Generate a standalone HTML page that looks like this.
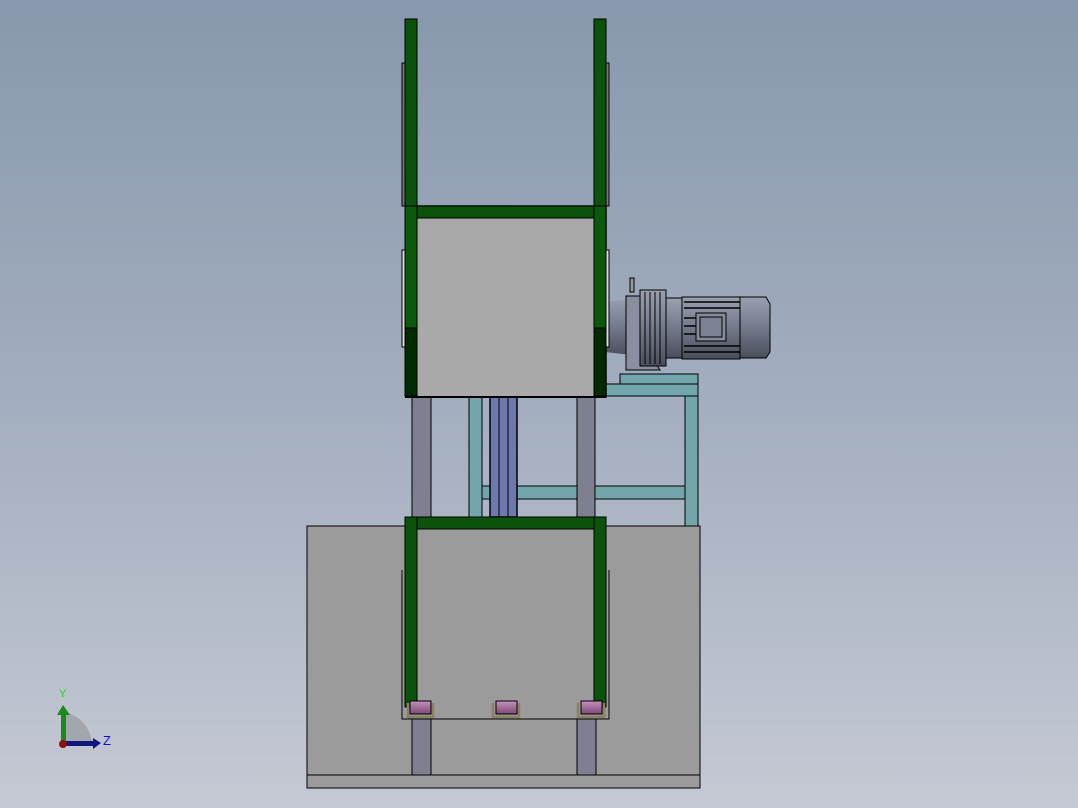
<!DOCTYPE html>
<html><head><style>
html,body{margin:0;padding:0}
body{width:1078px;height:808px;overflow:hidden;background:linear-gradient(#8898ad 0%,#a3aebf 50%,#c5c9d4 100%);font-family:"Liberation Sans",sans-serif}
svg{position:absolute;left:0;top:0}
</style></head><body>
<svg width="1078" height="808" viewBox="0 0 1078 808">
<defs>
<linearGradient id="mg" x1="0" y1="0" x2="0" y2="1"><stop offset="0" stop-color="#9aa0b0"/><stop offset="0.4" stop-color="#7c8294"/><stop offset="1" stop-color="#4a4e5c"/></linearGradient>
<linearGradient id="rg" x1="0" y1="0" x2="0" y2="1"><stop offset="0" stop-color="#c890c0"/><stop offset="1" stop-color="#7a4a74"/></linearGradient>
</defs>
<g stroke="#000" stroke-width="1">
<rect x="469" y="397" width="13" height="120" fill="#72a6ab"/>
<rect x="482" y="486" width="204" height="13" fill="#72a6ab"/>
<rect x="685" y="395" width="13" height="131" fill="#72a6ab"/>
<rect x="600" y="384" width="98" height="12" fill="#72a6ab"/>
<rect x="620" y="374" width="78" height="10" fill="#72a6ab"/>
<rect x="490" y="397" width="27" height="120" fill="#6d78ad" stroke-width="1.5"/>
<line x1="499" y1="397" x2="499" y2="517"/><line x1="508" y1="397" x2="508" y2="517"/>
<rect x="412" y="397" width="19" height="122" fill="#7e8092"/>
<rect x="577" y="397" width="18" height="122" fill="#7e8092"/>
<path d="M605 302 L640 298 L640 356 L605 352Z" fill="url(#mg)" stroke="none"/>
<path d="M626 296 L640 296 L640 340 L660 370 L626 370Z" fill="#8a8ea0"/>
<rect x="630" y="278" width="4" height="14" fill="#999"/>
<rect x="640" y="290" width="26" height="76" fill="url(#mg)"/>
<g stroke-width="1"><line x1="645" y1="292" x2="645" y2="364"/><line x1="650" y1="292" x2="650" y2="364"/><line x1="655" y1="292" x2="655" y2="364"/><line x1="660" y1="292" x2="660" y2="364"/></g>
<rect x="666" y="298" width="16" height="60" fill="url(#mg)"/>
<rect x="682" y="297" width="58" height="62" fill="url(#mg)"/>
<g stroke-width="1.5"><line x1="684" y1="302" x2="740" y2="302"/><line x1="684" y1="308" x2="740" y2="308"/><line x1="684" y1="346" x2="740" y2="346"/><line x1="684" y1="352" x2="740" y2="352"/><line x1="684" y1="318" x2="696" y2="318"/><line x1="684" y1="326" x2="696" y2="326"/><line x1="684" y1="334" x2="696" y2="334"/></g>
<rect x="696" y="313" width="30" height="28" fill="#858a9c"/>
<rect x="700" y="317" width="22" height="20" fill="#7c8194"/>
<path d="M740 297 L766 297 L770 304 L770 352 L766 358 L740 358Z" fill="url(#mg)"/>
<rect x="406" y="206" width="200" height="191" fill="#a9a9a9" stroke-width="1.5"/>
<rect x="402" y="63" width="3" height="143" fill="#777"/>
<rect x="402" y="250" width="3" height="97" fill="#ddd"/>
<rect x="606" y="63" width="3" height="143" fill="#777"/>
<rect x="606" y="250" width="3" height="97" fill="#ddd"/>
<rect x="405" y="19" width="12" height="188" fill="#0b520b"/>
<rect x="594" y="19" width="12" height="188" fill="#0b520b"/>
<rect x="417" y="206" width="177" height="12" fill="#0b520b"/>
<rect x="405" y="206" width="12" height="122" fill="#0b5a0b"/>
<rect x="594" y="206" width="12" height="122" fill="#0b5a0b"/>
<rect x="405" y="328" width="12" height="68" fill="#002a00"/>
<rect x="594" y="328" width="12" height="68" fill="#002a00"/>
<line x1="405" y1="397" x2="606" y2="397" stroke-width="2"/>
<rect x="307" y="526" width="393" height="262" fill="#9b9b9b"/>
<line x1="307" y1="775" x2="700" y2="775"/>
<path d="M402 570 L402 719 L609 719 L609 570" fill="none"/>
<rect x="412" y="719" width="19" height="56" fill="#7e8092"/>
<rect x="577" y="719" width="19" height="56" fill="#7e8092"/>
<rect x="405" y="517" width="12" height="190" fill="#0b520b"/>
<rect x="594" y="517" width="12" height="190" fill="#0b520b"/>
<rect x="417" y="517" width="177" height="12" fill="#0b520b"/>
<path d="M408 703 L408 717 L433 717 L433 703" fill="none" stroke="#8a8160" stroke-width="2.5"/>
<rect x="410" y="701" width="21" height="13" fill="url(#rg)"/>
<path d="M493 703 L493 717 L519 717 L519 703" fill="none" stroke="#8a8160" stroke-width="2.5"/>
<rect x="496" y="701" width="21" height="13" fill="url(#rg)"/>
<path d="M578 703 L578 717 L604 717 L604 703" fill="none" stroke="#8a8160" stroke-width="2.5"/>
<rect x="581" y="701" width="21" height="13" fill="url(#rg)"/>
</g>
<path d="M63 745 L63 712 A34 34 0 0 1 92 745Z" fill="#a4a6ad"/>
<rect x="61" y="713" width="5" height="31" fill="#1a8a1a"/>
<path d="M57 715 L63 705 L70 715Z" fill="#1a8a1a"/>
<rect x="64" y="741" width="30" height="5" fill="#101880"/>
<path d="M93 738 L101 743 L93 749Z" fill="#101880"/>
<circle cx="63" cy="744" r="4" fill="#901010"/>
<text x="59" y="697" font-size="11" fill="#20d020">Y</text>
<text x="103" y="745" font-size="13" fill="#1010e0">Z</text>
</svg>
</body></html>
